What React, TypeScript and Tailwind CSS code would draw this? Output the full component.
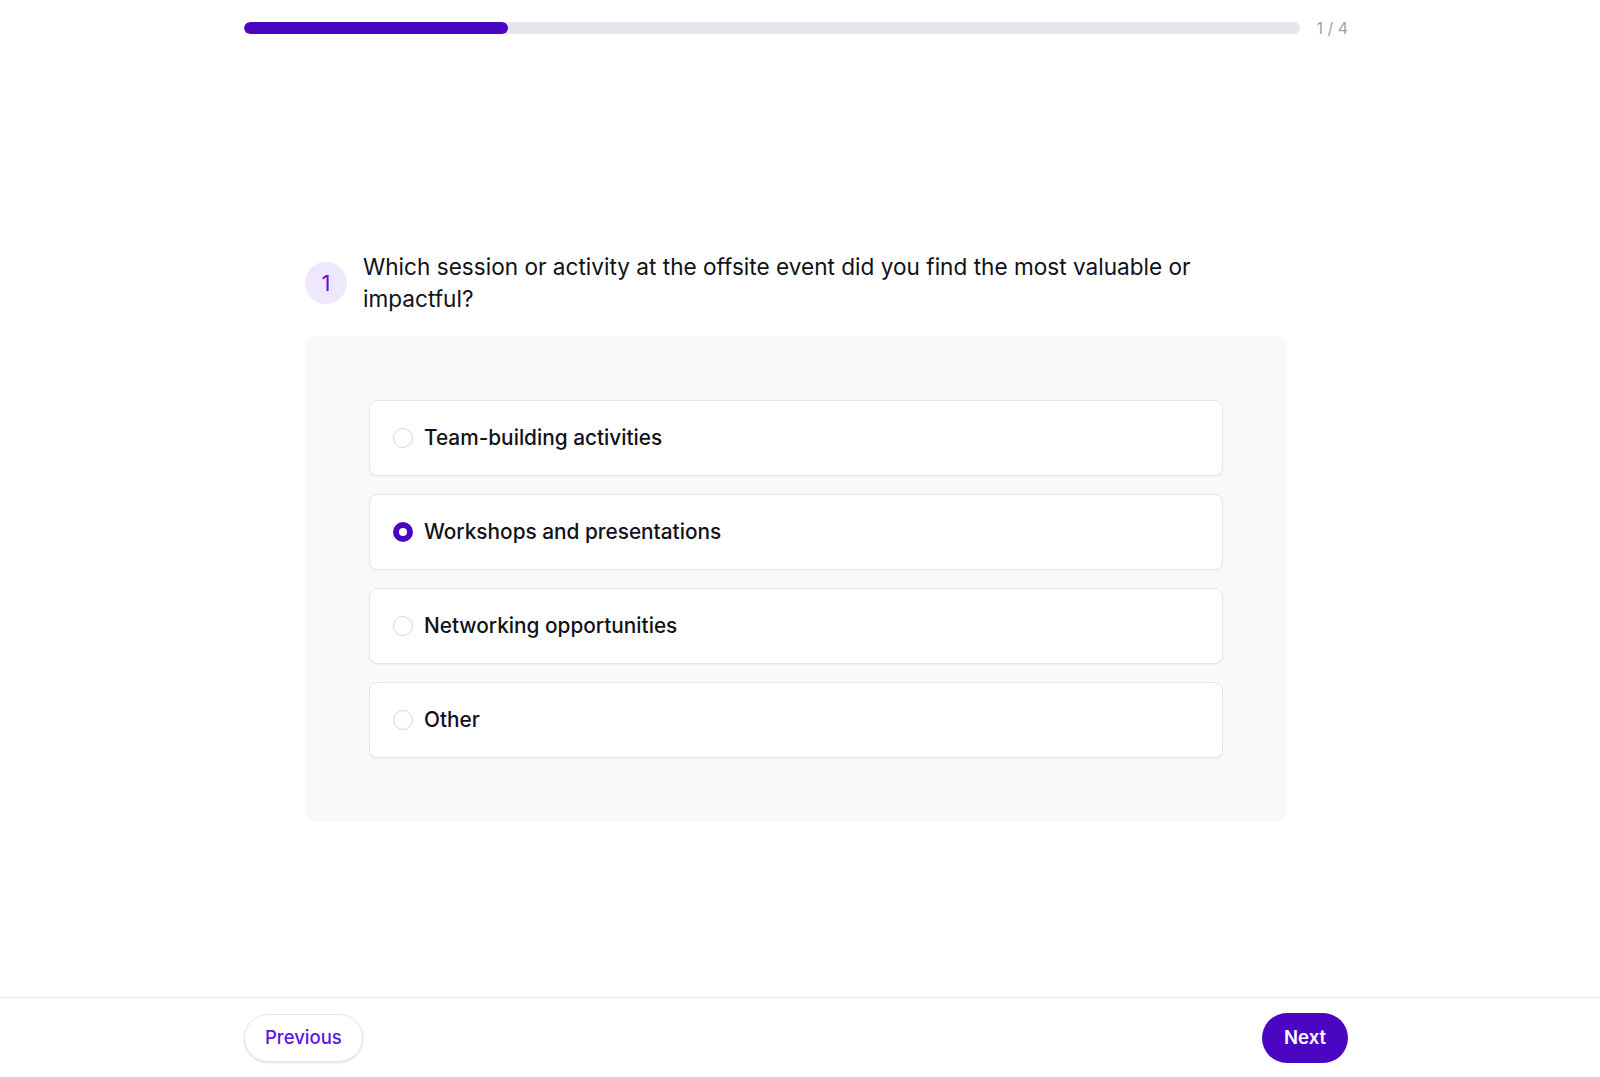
import React, { useState } from 'react';

const options = [
  'Team-building activities',
  'Workshops and presentations',
  'Networking opportunities',
  'Other',
];

const App: React.FC = () => {
  const [selected, setSelected] = useState(1);

  return (
    <div
      className="h-screen flex flex-col bg-white text-gray-900"
      style={{ fontFamily: 'Inter, "Noto Sans", sans-serif' }}
    >
      {/* Progress */}
      <div className="pr-2">
        <div className="w-[1104px] mx-auto pt-5 flex items-center gap-4">
          <div className="flex-1 h-3 rounded-full bg-[#e6e7eb] overflow-hidden">
            <div className="h-full w-1/4 rounded-full bg-[#4b06c2]" />
          </div>
          <span className="text-[16px] text-[#9ca3af] leading-none">1 / 4</span>
        </div>
      </div>

      {/* Question */}
      <div className="flex-1 pr-2">
        <div className="w-[982px] mx-auto pt-[215px]">
          <div className="flex items-center gap-4 mb-[21px]">
            <div className="w-[42px] h-[42px] shrink-0 rounded-full bg-[#efe7fd] flex items-center justify-center text-[22px] text-[#5b12d9]">
              1
            </div>
            <h1 className="text-[22.6px] leading-8 text-[#111118]">
              Which session or activity at the offsite event did you find the most valuable or
              impactful?
            </h1>
          </div>

          <div className="bg-[#f8f9fa] rounded-xl p-16 flex flex-col gap-[18px]">
            {options.map((opt, i) => (
              <button
                key={opt}
                onClick={() => setSelected(i)}
                className="h-[76px] px-[23px] flex items-center gap-[11px] bg-white border border-[#e4e6ea] rounded-lg shadow-[0_1px_2px_rgba(0,0,0,0.04)] text-left"
              >
                {selected === i ? (
                  <span className="w-5 h-5 rounded-full bg-[#4b06c2] flex items-center justify-center">
                    <span className="w-2 h-2 rounded-full bg-white" />
                  </span>
                ) : (
                  <span className="w-5 h-5 rounded-full border-[1.5px] border-[#d4d6dc] bg-white" />
                )}
                <span className="text-[20.8px] font-medium text-[#111118]">{opt}</span>
              </button>
            ))}
          </div>
        </div>
      </div>

      {/* Footer */}
      <div className="h-20 border-t border-[#e5e7eb] pr-2">
        <div className="w-[1104px] mx-auto h-full flex items-center justify-between">
          <button className="h-12 px-5 rounded-full border border-[#e5e7eb] bg-white shadow-sm text-[18.5px] font-medium text-[#5e12e6]">
            Previous
          </button>
          <button className="h-[50px] px-[22px] rounded-full bg-[#4b06c2] text-[18.5px] font-semibold text-white">
            Next
          </button>
        </div>
      </div>
    </div>
  );
};

export default App;
